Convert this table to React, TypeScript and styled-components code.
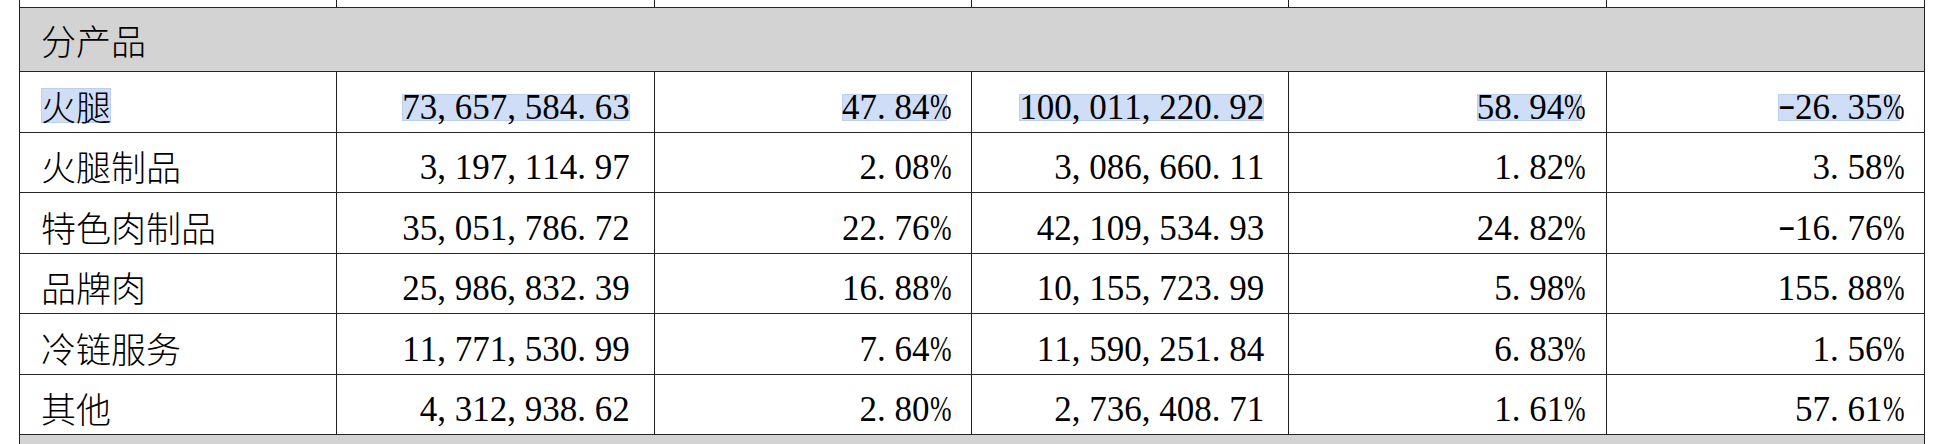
import styled, { createGlobalStyle, css } from 'styled-components';

const GlobalStyle = createGlobalStyle`
  html, body {
    margin: 0;
    padding: 0;
    background: #ffffff;
  }
`;

const Sheet = styled.div`
  margin-left: 19px;
  width: 1906px;
  box-sizing: border-box;
  border-left: 1px solid #1f1f1f;
  border-right: 1px solid #1f1f1f;
  color: #000;
`;

const Row = styled.div<{ $h: number }>`
  display: grid;
  grid-template-columns: repeat(6, 1fr);
  height: ${({ $h }) => $h}px;
  box-sizing: border-box;
  border-bottom: 1px solid #262626;
`;

const Cell = styled.div<{ $right?: boolean; $pb?: number }>`
  display: flex;
  align-items: flex-end;
  justify-content: ${({ $right }) => ($right ? 'flex-end' : 'flex-start')};
  box-sizing: border-box;
  padding: 0 ${({ $right }) => ($right ? '24px' : '0')} ${({ $pb }) => $pb ?? 0}px
    ${({ $right }) => ($right ? '0' : '21px')};
  border-right: 1px solid #1f1f1f;
  overflow: visible;
  white-space: nowrap;

  &:last-child {
    border-right: none;
  }
`;

const GroupRow = styled.div<{ $h: number }>`
  display: flex;
  align-items: flex-end;
  height: ${({ $h }) => $h}px;
  box-sizing: border-box;
  padding: 0 0 14px 21px;
  background: #d3d3d3;
  border-bottom: 1px solid #262626;
`;

const highlight = css`
  background: #cfddf7;
  box-shadow: inset 0 0 0 1px #bccff0;
`;

const Label = styled.span<{ $sel?: boolean }>`
  display: inline-block;
  font-family: "Noto Sans CJK SC", "Noto Sans CJK JP", sans-serif;
  font-weight: 300;
  font-size: 35px;
  line-height: 35px;
  height: 35px;
  ${({ $sel }) => $sel && highlight}
`;

const Figure = styled.span<{ $sel?: boolean }>`
  display: inline-block;
  font-family: "Liberation Serif", "Times New Roman", serif;
  font-size: 35px;
  line-height: 27px;
  height: 27px;
  ${({ $sel }) => $sel && highlight}
`;

const Glyph = styled.span<{ $kind: 'plain' | 'pct' | 'minus' }>`
  display: inline-block;
  width: 0.5em;
  text-align: left;
  ${({ $kind }) =>
    $kind === 'pct' &&
    css`
      transform: scaleX(0.74);
      transform-origin: left center;
    `}
  ${({ $kind }) =>
    $kind === 'minus' &&
    css`
      transform: translate(0, -3px) scaleX(1.5);
      transform-origin: left center;
    `}
`;

const Num = ({ value, sel }: { value: string; sel?: boolean }) => (
  <Figure $sel={sel}>
    {value.split('').map((ch, i) => (
      <Glyph key={i} $kind={ch === '%' ? 'pct' : ch === '-' ? 'minus' : 'plain'}>
        {ch}
      </Glyph>
    ))}
  </Figure>
);

const rows: string[][] = [
  ['火腿', '73,657,584.63', '47.84%', '100,011,220.92', '58.94%', '-26.35%'],
  ['火腿制品', '3,197,114.97', '2.08%', '3,086,660.11', '1.82%', '3.58%'],
  ['特色肉制品', '35,051,786.72', '22.76%', '42,109,534.93', '24.82%', '-16.76%'],
  ['品牌肉', '25,986,832.39', '16.88%', '10,155,723.99', '5.98%', '155.88%'],
  ['冷链服务', '11,771,530.99', '7.64%', '11,590,251.84', '6.83%', '1.56%'],
  ['其他', '4,312,938.62', '2.80%', '2,736,408.71', '1.61%', '57.61%'],
];

const heights = [61, 60, 61, 60, 61, 60];

export default function App() {
  return (
    <>
      <GlobalStyle />
      <Sheet>
        <Row $h={8}>
          {Array.from({ length: 6 }).map((_, i) => (
            <Cell key={i} />
          ))}
        </Row>
        <GroupRow $h={64}>
          <Label>分产品</Label>
        </GroupRow>
        {rows.map((r, ri) => (
          <Row key={r[0]} $h={heights[ri]}>
            <Cell $pb={9}>
              <Label $sel={ri === 0}>{r[0]}</Label>
            </Cell>
            {r.slice(1).map((v, ci) => (
              <Cell key={ci} $right $pb={11}>
                <Num value={v} sel={ri === 0} />
              </Cell>
            ))}
          </Row>
        ))}
        <GroupRow $h={20} />
      </Sheet>
    </>
  );
}
